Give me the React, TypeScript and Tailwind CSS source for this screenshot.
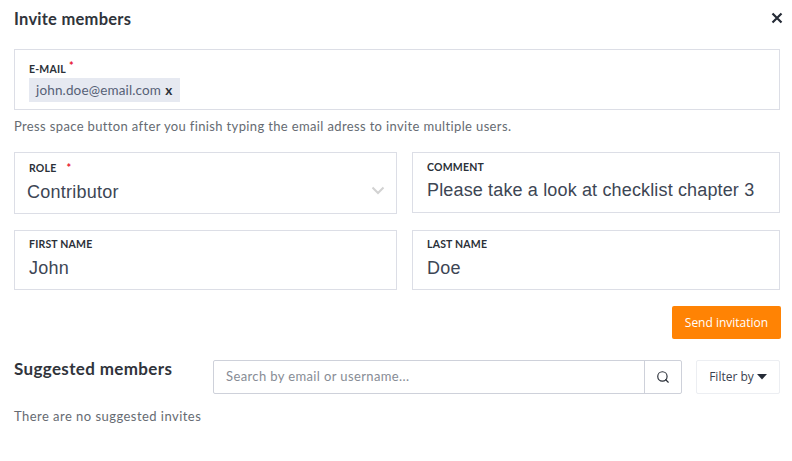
import { Search } from "lucide-react";

const sans = "font-['Lato','Noto_Sans',sans-serif]";

function Label({ text, star, gap }: { text: string; star?: boolean; gap?: string }) {
  return (
    <div className="flex h-[14px] items-center text-[10.5px] font-bold leading-[14px] tracking-[0.2px] text-[#2b3038]">
      {text}
      {star && <span className={`${gap} text-[11px] font-bold text-[#e8112d]`}>*</span>}
    </div>
  );
}

function Field({
  label,
  value,
  star,
  labelTop = "pt-[6px]",
  valueClass = "mt-[5px]",
  children,
  className,
}: {
  label: string;
  value: string;
  star?: boolean;
  labelTop?: string;
  valueClass?: string;
  children?: React.ReactNode;
  className?: string;
}) {
  return (
    <div className={`relative border border-[#dcdee6] pl-[14px] ${className}`}>
      <div className={labelTop}>
        <Label text={label} star={star} gap="ml-[10px]" />
      </div>
      <div className={`font-['Liberation_Sans',sans-serif] text-[18px] leading-[24px] text-[#3d4654] ${valueClass}`}>
        {value}
      </div>
      {children}
    </div>
  );
}

export default function App() {
  return (
    <div className={`h-[461px] w-[792px] overflow-hidden bg-white px-[14px] ${sans}`}>
      <div className="flex h-[49px] items-start justify-between pt-[9px]">
        <h2 className="text-[16.5px] font-bold leading-[20px] tracking-[0.25px] text-[#30343b]">Invite members</h2>
        <svg className="mr-[-3px] mt-[3px] translate-x-[2px]" width="12" height="12" viewBox="0 0 12 12" fill="none">
          <path d="M1.5 1.5l9 9M10.5 1.5l-9 9" stroke="#252b36" strokeWidth="2.2" />
        </svg>
      </div>

      <div className="h-[61px] w-[766px] border border-[#dcdee6] pl-[14px] pt-[13px]">
        <div className="flex h-[14px] items-center text-[10.5px] font-bold tracking-[0.2px] text-[#2b3038]">
          E-MAIL
          <span className="relative top-[-4px] ml-[3px] text-[11px] text-[#e8112d]">*</span>
        </div>
        <div className="mt-[1px] flex h-[24px] w-[151px] items-center bg-[#e6e9f1] pl-[7px] text-[13.5px] tracking-[0.15px] text-[#566176]">
          john.doe@email.com
          <span className="ml-[4px] font-bold text-[#2b3038]">x</span>
        </div>
      </div>

      <p className="mt-[8px] h-[34px] text-[13px] leading-[16px] tracking-[0.36px] text-[#666b72]">
        Press space button after you finish typing the email adress to invite multiple users.
      </p>

      <div className="grid w-[766px] grid-cols-[383px_368px] gap-x-[15px] gap-y-[16px]">
        <Field
          label="ROLE"
          value="Contributor"
          star
          labelTop="pt-[8px]"
          valueClass="mt-[5px] ml-[-2px] tracking-[0.25px]"
          className="h-[62px]"
        >
          <svg className="absolute right-[11px] top-[33px]" width="14" height="9" viewBox="0 0 14 9" fill="none">
            <path d="M1.5 1.5L7 7l5.5-5.5" stroke="#d2d2d2" strokeWidth="2" />
          </svg>
        </Field>
        <Field
          label="COMMENT"
          value="Please take a look at checklist chapter 3"
          labelTop="pt-[7px]"
          valueClass="mt-[4px] tracking-[0.15px]"
          className="h-[61px]"
        />
        <Field label="FIRST NAME" value="John" labelTop="pt-[6px]" valueClass="mt-[5px] tracking-[0.25px]" className="h-[60px]" />
        <Field label="LAST NAME" value="Doe" labelTop="pt-[6px]" valueClass="mt-[5px] tracking-[0.25px]" className="h-[60px]" />
      </div>

      <div className="mt-[16px] flex w-[767px] justify-end">
        <button className="h-[33px] w-[109px] rounded-[2px] bg-[#ff8304] font-['Open_Sans',sans-serif] text-[12px] text-white">
          Send invitation
        </button>
      </div>

      <div className="mt-[21px] flex w-[766px] items-start">
        <h3 className="w-[199px] text-[17px] font-bold leading-[18px] tracking-[0.35px] text-[#30343b]">Suggested members</h3>
        <div className="flex h-[34px] w-[469px] rounded-[2px] border border-[#ced1da]">
          <div className="flex-1 pl-[12px] text-[13px] leading-[30px] tracking-[0.38px] text-[#878c95]">
            Search by email or username...
          </div>
          <div className="flex w-[37px] items-center justify-center border-l border-[#ced1da]">
            <Search size={14} strokeWidth={2} className="text-[#2a2f38]" />
          </div>
        </div>
        <button className="ml-[14px] flex h-[34px] w-[84px] items-center justify-center gap-[3px] rounded-[2px] border border-[#eceef2] font-['Open_Sans',sans-serif] text-[12px] text-[#3b4250]">
          Filter by
          <svg width="10" height="6" viewBox="0 0 10 6">
            <path d="M0 0h10L5 5.5z" fill="#252b36" />
          </svg>
        </button>
      </div>

      <p className="mt-[14px] text-[13px] leading-[16px] tracking-[0.46px] text-[#666b72]">There are no suggested invites</p>
    </div>
  );
}
